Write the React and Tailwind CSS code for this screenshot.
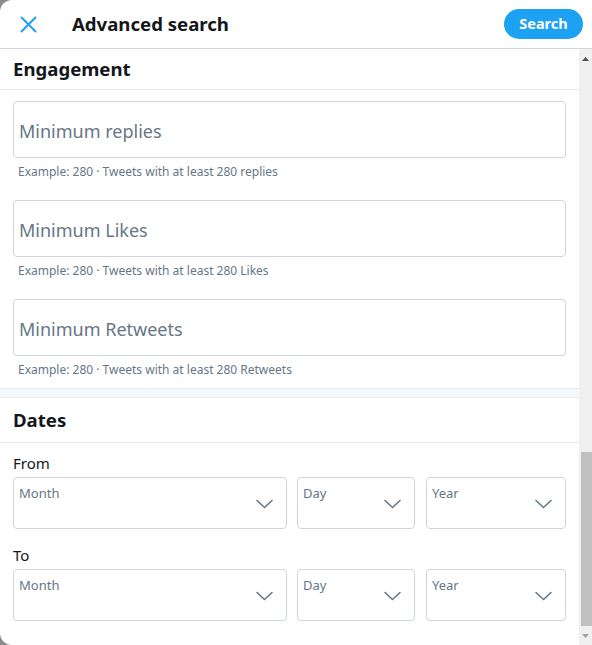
import React from "react";

const font = { fontFamily: '"Noto Sans", "Open Sans", Arial, sans-serif' };

function Chevron() {
  return (
    <svg width="17" height="10" viewBox="0 0 17 10" fill="none" className="shrink-0">
      <path d="M1 1.5 L8.5 8.5 L16 1.5" stroke="#657786" strokeWidth="1.6" strokeLinecap="round" strokeLinejoin="round" />
    </svg>
  );
}

function TextField({ placeholder, help }) {
  return (
    <div className="flex flex-col">
      <div className="h-[57px] border border-[#ccd6dd] rounded-[4px] flex items-center px-[5px]">
        <span className="text-[18px] leading-[24px] pt-[2px] text-[#657786]">{placeholder}</span>
      </div>
      <div className="pt-[6px] pl-[5px] text-[12px] leading-[16px] text-[#657786]">{help}</div>
    </div>
  );
}

function Select({ label, w }) {
  return (
    <div className={`${w} h-[52px] border border-[#ccd6dd] rounded-[4px] flex justify-between pl-[5px] pr-[13px]`}>
      <span className="text-[13px] leading-[16px] pt-[7px] text-[#657786]">{label}</span>
      <div className="flex items-center pt-[2px]">
        <Chevron />
      </div>
    </div>
  );
}

function DateRow({ title }) {
  return (
    <div className="flex flex-col">
      <div className="text-[15px] leading-[20px] text-[#14171a] pt-[10px] pb-[4px]">{title}</div>
      <div className="flex">
        <Select label="Month" w="w-[274px]" />
        <div className="w-[10px]" />
        <Select label="Day" w="w-[118px]" />
        <div className="w-[11px]" />
        <Select label="Year" w="w-[140px]" />
      </div>
    </div>
  );
}

export default function App() {
  return (
    <div className="w-[592px] h-[645px] bg-[#8c8c8c] overflow-hidden" style={font}>
      <div className="h-full bg-white rounded-l-[12px] flex flex-col overflow-hidden">
        <header className="h-[49px] shrink-0 border-b border-[#ccd6dd] flex items-center">
          <div className="w-[72px] flex items-center pl-[20px]">
            <svg width="17" height="17" viewBox="0 0 17 17" fill="none">
              <path d="M1.5 1.5 L15.5 15.5 M15.5 1.5 L1.5 15.5" stroke="#1da1f2" strokeWidth="2" strokeLinecap="round" />
            </svg>
          </div>
          <h1 className="flex-1 text-[18.6px] font-bold text-[#14171a]">Advanced search</h1>
          <button className="mr-[9px] h-[30px] w-[79px] rounded-full bg-[#1da1f2] text-white text-[14.5px] font-bold flex items-center justify-center">
            Search
          </button>
        </header>
        <div className="flex flex-1 min-h-0">
          <div className="flex-1 overflow-hidden">
            <div className="h-[41px] border-b border-[#e6ecf0] flex items-center px-[13px]">
              <h2 className="text-[18.6px] font-bold text-[#14171a]">Engagement</h2>
            </div>
            <div className="px-[13px] pt-[11px] flex flex-col gap-[20px]">
              <TextField placeholder="Minimum replies" help="Example: 280 · Tweets with at least 280 replies" />
              <TextField placeholder="Minimum Likes" help="Example: 280 · Tweets with at least 280 Likes" />
              <TextField placeholder="Minimum Retweets" help="Example: 280 · Tweets with at least 280 Retweets" />
            </div>
            <div className="mt-[10px] h-[10px] bg-[#f5f8fa] border-y border-[#e6ecf0]" />
            <div className="h-[45px] border-b border-[#e6ecf0] flex items-center px-[13px]">
              <h2 className="text-[18.6px] font-bold text-[#14171a]">Dates</h2>
            </div>
            <div className="px-[13px] flex flex-col gap-[6px]">
              <DateRow title="From" />
              <DateRow title="To" />
            </div>
          </div>
          <div className="w-[13px] bg-[#f0f0f0] flex flex-col items-center">
            <div className="h-[18px] flex items-center justify-center pt-[2px]">
              <svg width="7" height="4" viewBox="0 0 7 4"><path d="M0 4 L3.5 0 L7 4 Z" fill="#505050" /></svg>
            </div>
            <div className="flex-1" />
            <div className="w-[11px] ml-[2px] h-[174px] bg-[#c1c1c1]" />
            <div className="h-[19px] flex items-center justify-center">
              <svg width="7" height="4" viewBox="0 0 7 4"><path d="M0 0 L3.5 4 L7 0 Z" fill="#a3a3a3" /></svg>
            </div>
          </div>
        </div>
      </div>
    </div>
  );
}
